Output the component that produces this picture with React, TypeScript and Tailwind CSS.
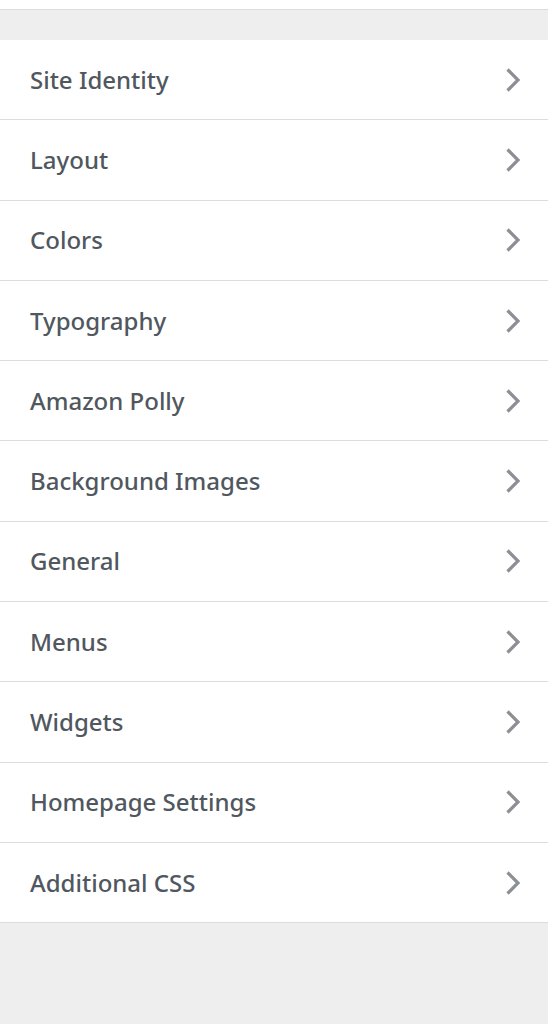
const SECTIONS = [
  "Site Identity",
  "Layout",
  "Colors",
  "Typography",
  "Amazon Polly",
  "Background Images",
  "General",
  "Menus",
  "Widgets",
  "Homepage Settings",
  "Additional CSS",
];

function Chevron() {
  return (
    <svg width="16" height="26" viewBox="0 0 16 26" className="text-[#8c8f94]">
      <polyline
        points="2.5,2.5 13,13 2.5,23.5"
        fill="none"
        stroke="currentColor"
        strokeWidth="3.2"
      />
    </svg>
  );
}

export default function App() {
  return (
    <div
      className="flex h-[1024px] w-full flex-col bg-[#eeeeee]"
      style={{ fontFamily: '"Noto Sans", "Open Sans", sans-serif' }}
    >
      <div className="h-[10px] shrink-0 border-b border-[#dcdcde] bg-white" />
      <ul className="mt-[30px]">
        {SECTIONS.map((s) => (
          <li
            key={s}
            className="flex h-[80.3px] items-center justify-between border-b border-[#dcdcde] bg-white pl-[30px] pr-[27px]"
          >
            <span className="text-[24px] font-medium text-[#50575e]">{s}</span>
            <Chevron />
          </li>
        ))}
      </ul>
    </div>
  );
}
